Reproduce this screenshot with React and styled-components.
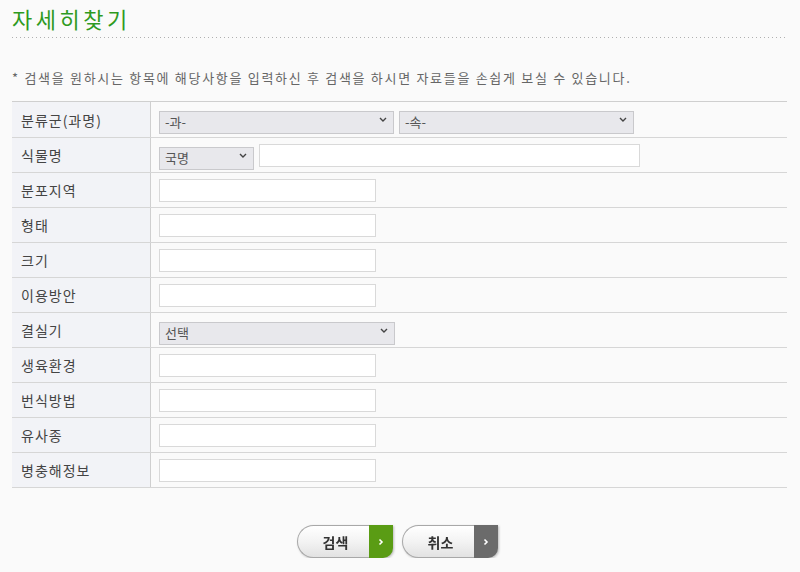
import React from "react";
import styled, { createGlobalStyle } from "styled-components";

//Styles
const GlobalStyle = createGlobalStyle`
  html, body {
    margin: 0;
    padding: 0;
    background: #fafafa;
    font-family: "Noto Sans CJK KR", "Noto Sans", sans-serif;
    color: #333;
  }
`;

const Page = styled.div`
  padding: 0 13px 0 12px;
`;

const Title = styled.h2`
  margin: 0;
  padding-top: 1px;
  height: 37px;
  font-size: 22px;
  font-weight: 400;
  letter-spacing: 3.5px;
  color: #2f9a1f;
  line-height: 34px;
  background-image: repeating-linear-gradient(
    to right,
    #b0b0b0 0,
    #b0b0b0 1px,
    transparent 1px,
    transparent 4px
  );
  background-size: 100% 1px;
  background-repeat: no-repeat;
  background-position: left bottom;
`;

const Note = styled.p`
  margin: 29px 0 0;
  height: 24px;
  font-size: 13px;
  letter-spacing: 1.7px;
  color: #666;
  line-height: 22px;
`;

const Table = styled.div`
  margin-top: 10px;
  border-top: 1px solid #cfcfcf;
`;

const Row = styled.div`
  display: grid;
  grid-template-columns: 139px 1fr;
  height: ${(p) => (p.$first ? 36 : 35)}px;
  box-sizing: border-box;
  border-bottom: 1px solid #d6d6d6;
`;

const Label = styled.div`
  display: flex;
  align-items: center;
  padding-left: 9px;
  background: #f2f3f7;
  border-right: 1px solid #cfcfcf;
  font-size: 14px;
  letter-spacing: 1px;
  color: #444;
`;

const Field = styled.div`
  display: flex;
  align-items: center;
  gap: 5px;
  padding-left: 8px;
`;

const TextInput = styled.input`
  box-sizing: border-box;
  width: ${(p) => p.$width || 217}px;
  height: 23px;
  border: 1px solid #d9d9d9;
  background: #fff;
  outline: none;
`;

const SelectWrap = styled.div`
  position: relative;
  width: ${(p) => p.$width}px;
  height: 23px;
`;

const Select = styled.select`
  appearance: none;
  box-sizing: border-box;
  width: 100%;
  height: 100%;
  padding: 0 20px 2px 5px;
  border: 1px solid #c9c9cc;
  background: #e8e8ec;
  font-family: "Noto Sans CJK KR", "Noto Sans", sans-serif;
  font-size: 13px;
  line-height: 19px;
  color: #555;
  outline: none;
`;

const Chevron = styled.svg`
  position: absolute;
  right: 7px;
  top: 9px;
  pointer-events: none;
`;

const ButtonBar = styled.div`
  display: flex;
  justify-content: center;
  gap: 9px;
  margin-top: 37px;
  padding-right: 4px;
`;

const Button = styled.button`
  display: flex;
  padding: 0;
  width: 96px;
  height: 33px;
  border: none;
  background: transparent;
  cursor: pointer;
  filter: drop-shadow(1px 1px 1px rgba(0, 0, 0, 0.25));
`;

const ButtonLabel = styled.span`
  flex: 1;
  display: flex;
  align-items: center;
  justify-content: center;
  padding-left: 4px;
  box-sizing: border-box;
  border: 1px solid #a8a8a8;
  border-right: none;
  border-radius: 17px 0 0 17px;
  background: linear-gradient(#ffffff, #f3f3f3 50%, #e2e2e2);
  font-family: "Noto Sans CJK KR", "Noto Sans", sans-serif;
  font-size: 14px;
  font-weight: 700;
  color: #333;
`;

const ButtonArrow = styled.span`
  display: flex;
  align-items: center;
  justify-content: center;
  width: 24px;
  border-radius: 0 0 10px 0;
  background: ${(p) => p.$color};
`;

const ChevronDown = () => (
  <Chevron width="8" height="5" viewBox="0 0 8 5">
    <path d="M1 1l3 3 3-3" fill="none" stroke="#444" strokeWidth="1.4" />
  </Chevron>
);

const Dropdown = ({ width, value }) => (
  <SelectWrap $width={width}>
    <Select defaultValue={value}>
      <option>{value}</option>
    </Select>
    <ChevronDown />
  </SelectWrap>
);

const SearchButton = ({ children, color }) => (
  <Button type="button">
    <ButtonLabel>{children}</ButtonLabel>
    <ButtonArrow $color={color}>
      <svg width="6" height="8" viewBox="0 0 6 8">
        <path d="M1.5 1.5l2.5 2.5-2.5 2.5" fill="none" stroke="#fff" strokeWidth="1.6" />
      </svg>
    </ButtonArrow>
  </Button>
);

const textRows = ["분포지역", "형태", "크기", "이용방안"];
const lowerRows = ["생육환경", "번식방법", "유사종", "병충해정보"];

const App = () => {
  return (
    <Page>
      <GlobalStyle />
      <Title>자세히찾기</Title>
      <Note>* 검색을 원하시는 항목에 해당사항을 입력하신 후 검색을 하시면 자료들을 손쉽게 보실 수 있습니다.</Note>
      <Table>
        <Row $first>
          <Label>분류군(과명)</Label>
          <Field>
            <Dropdown width={235} value="-과-" />
            <Dropdown width={235} value="-속-" />
          </Field>
        </Row>
        <Row>
          <Label>식물명</Label>
          <Field>
            <Dropdown width={95} value="국명" />
            <TextInput $width={381} />
          </Field>
        </Row>
        {textRows.map((label) => (
          <Row key={label}>
            <Label>{label}</Label>
            <Field>
              <TextInput />
            </Field>
          </Row>
        ))}
        <Row>
          <Label>결실기</Label>
          <Field>
            <Dropdown width={236} value="선택" />
          </Field>
        </Row>
        {lowerRows.map((label) => (
          <Row key={label}>
            <Label>{label}</Label>
            <Field>
              <TextInput />
            </Field>
          </Row>
        ))}
      </Table>
      <ButtonBar>
        <SearchButton color="#5a9c14">검색</SearchButton>
        <SearchButton color="#6b6b6b">취소</SearchButton>
      </ButtonBar>
    </Page>
  );
};

export default App;
